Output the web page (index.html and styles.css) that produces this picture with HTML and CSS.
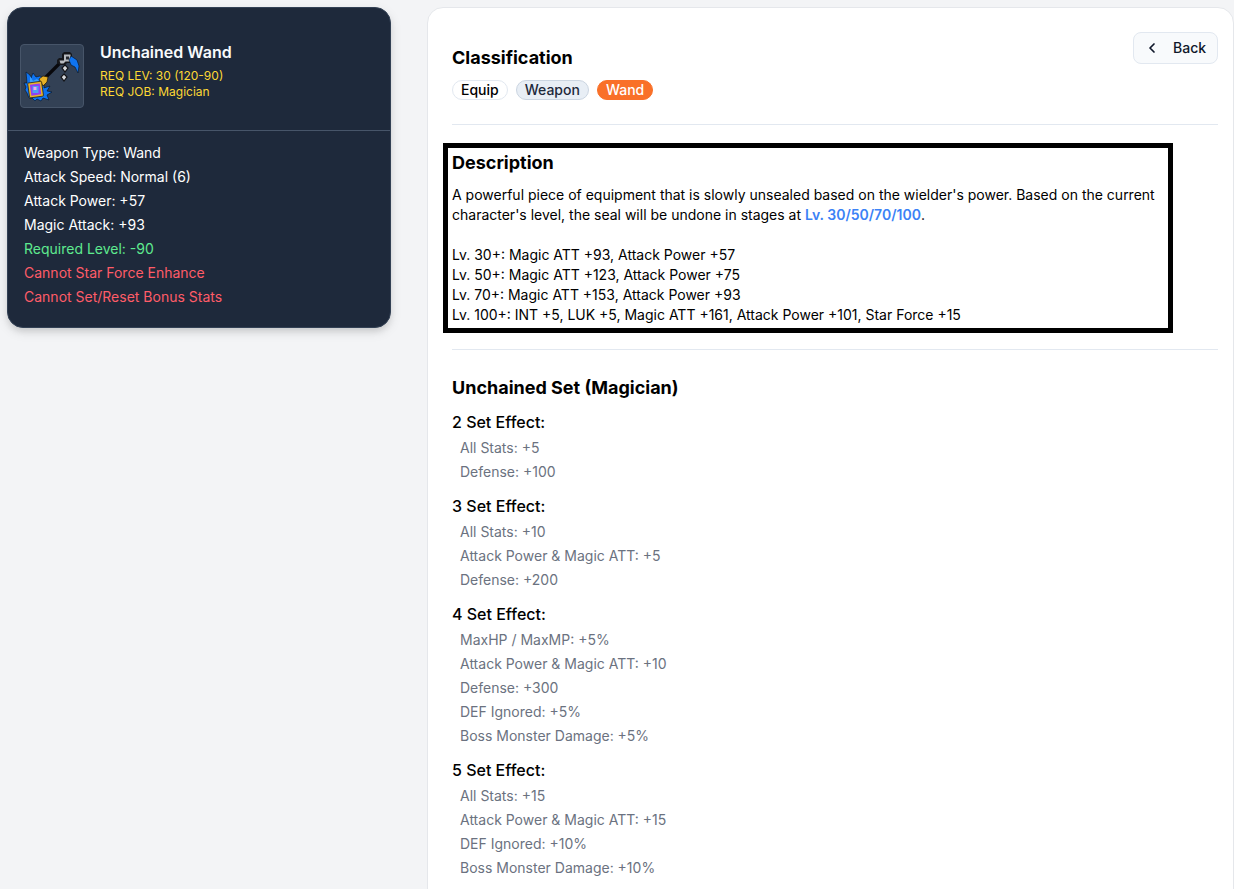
FILE: index.html
```html
<!DOCTYPE html>
<html lang="en">
<head>
<meta charset="utf-8">
<title>Unchained Wand</title>
<link rel="stylesheet" href="styles.css">
</head>
<body>
<div class="page">
  <aside class="card">
    <header class="card-head">
      <div class="thumb">
        <svg width="62" height="62" viewBox="0 0 62 62" aria-hidden="true">
          <path d="M5 27l4 3 1 3 2-5 3 4 4-1 4 2 0 10 6-2-3 5 5 1-5 3 2 5-6-2-2 3-4-2-2 2-3-3-3 0-2-5-2-3 1-3-2-4 3 0z" fill="#0f74f0" stroke="#07101f" stroke-width=".6"/>
          <path d="M9 31l3 5 4-2 3 3-6 4-4 0z" fill="#38a0ff"/>
          <path d="M24 33L39 18" stroke="#08080c" stroke-width="3.200"/>
          <path d="M18 34l4-3 5 1-1 5-4 4z" fill="#e6b026" stroke="#1d1506" stroke-width=".7"/>
          <rect x="7.500" y="37" width="14" height="15" rx="1" fill="#e8b42c" stroke="#1d1506" stroke-width=".7" transform="rotate(-8 15 44)"/>
          <rect x="9.500" y="39" width="10" height="11" fill="#8f3ff5" transform="rotate(-8 15 44)"/>
          <rect x="11.500" y="41" width="6" height="7" fill="#4f9ff5"/>
          <rect x="12.500" y="42" width="3" height="3" fill="#f0a8ee"/>
          <path d="M36 15l2-2h3V9l2-2h6l2 2v9h-5l-2 2h-5l-3-2z" fill="#15161a"/>
          <path d="M38.500 15.500h4.500v-6h6.500v7h-5l-2 2h-3z" fill="#b7babf"/>
          <rect x="45" y="11.500" width="3" height="3" fill="#26282e"/>
          <path d="M44 20l3 3-3 4-3-4z" fill="#d4d6da" stroke="#121317" stroke-width="1.200"/>
          <path d="M43 29l3 3-3 4-3-4z" fill="#d4d6da" stroke="#121317" stroke-width="1.200"/>
          <path d="M50 11l6 4 2 6-1 7-3-6-4-2-2-5z" fill="#0f74f0" stroke="#07101f" stroke-width=".6"/>
        </svg>
      </div>
      <div class="titles">
        <h1 class="item-name">Unchained Wand</h1>
        <p class="req">REQ LEV: 30 (120-90)</p>
        <p class="req">REQ JOB: Magician</p>
      </div>
    </header>
    <ul class="stats">
      <li>Weapon Type: Wand</li>
      <li>Attack Speed: Normal (6)</li>
      <li>Attack Power: +57</li>
      <li>Magic Attack: +93</li>
      <li class="good">Required Level: -90</li>
      <li class="bad">Cannot Star Force Enhance</li>
      <li class="bad">Cannot Set/Reset Bonus Stats</li>
    </ul>
  </aside>

  <main class="panel">
    <section class="classification">
      <div>
        <h2 class="section-title">Classification</h2>
        <div class="tags">
          <span class="tag tag-plain">Equip</span>
          <span class="tag tag-soft">Weapon</span>
          <span class="tag tag-hot">Wand</span>
        </div>
      </div>
      <button class="back" type="button">
        <svg width="16" height="16" viewBox="0 0 16 16" fill="none" stroke="#0f172a" stroke-width="1.700" stroke-linecap="round" stroke-linejoin="round" aria-hidden="true"><path d="M10 4L6 8l4 4"/></svg>
        <span>Back</span>
      </button>
    </section>

    <section class="description">
      <h2 class="section-title">Description</h2>
      <p class="desc-text">A powerful piece of equipment that is slowly unsealed based on the wielder's power. Based on the current character's level, the seal will be undone in stages at <strong class="hl">Lv. 30/50/70/100</strong>.</p>
      <p class="desc-text">Lv. 30+: Magic ATT +93, Attack Power +57<br>Lv. 50+: Magic ATT +123, Attack Power +75<br>Lv. 70+: Magic ATT +153, Attack Power +93<br>Lv. 100+: INT +5, LUK +5, Magic ATT +161, Attack Power +101, Star Force +15</p>
    </section>

    <section class="set">
      <h2 class="section-title">Unchained Set (Magician)</h2>
      <div class="tiers">
        <div class="tier">
          <h3>2 Set Effect:</h3>
          <p>All Stats: +5</p>
          <p>Defense: +100</p>
        </div>
        <div class="tier">
          <h3>3 Set Effect:</h3>
          <p>All Stats: +10</p>
          <p>Attack Power &amp; Magic ATT: +5</p>
          <p>Defense: +200</p>
        </div>
        <div class="tier">
          <h3>4 Set Effect:</h3>
          <p>MaxHP / MaxMP: +5%</p>
          <p>Attack Power &amp; Magic ATT: +10</p>
          <p>Defense: +300</p>
          <p>DEF Ignored: +5%</p>
          <p>Boss Monster Damage: +5%</p>
        </div>
        <div class="tier">
          <h3>5 Set Effect:</h3>
          <p>All Stats: +15</p>
          <p>Attack Power &amp; Magic ATT: +15</p>
          <p>DEF Ignored: +10%</p>
          <p>Boss Monster Damage: +10%</p>
        </div>
      </div>
    </section>
  </main>
</div>
</body>
</html>
```
FILE: styles.css
```css
* { box-sizing: border-box; }
html, body { margin: 0; height: 100%; overflow: hidden; }
body {
  background: #f3f4f6;
  color: #000;
  font-family: Inter, "Liberation Sans", sans-serif;
  font-size: 14px;
  line-height: 20px;
}
.page {
  display: flex;
  align-items: flex-start;
  gap: 36px;
  padding: 7px 0 0 7px;
}
.card {
  flex: 0 0 384px;
  height: 321px;
  background: #1e293b;
  border: 1px solid #334155;
  border-radius: 16px;
  box-shadow: 0 4px 6px -1px rgba(0,0,0,.1), 0 4px 12px rgba(0,0,0,.1);
  color: #fff;
}
.card-head {
  display: flex;
  align-items: center;
  gap: 16px;
  height: 123px;
  padding: 13px 12px 0;
  border-bottom: 1px solid #475569;
}
.thumb {
  flex: none;
  display: flex;
  align-items: center;
  justify-content: center;
  width: 64px;
  height: 64px;
  background: #334155;
  border: 1px solid #475569;
  border-radius: 4px;
}
.titles { margin-top: -12px; }
.item-name {
  margin: 0 0 4px;
  font-size: 16px;
  line-height: 24px;
  font-weight: 600;
  color: #f8fafc;
}
.req {
  margin: 0;
  font-size: 12px;
  line-height: 16px;
  color: #fdd835;
}
.stats {
  list-style: none;
  margin: 0;
  padding: 10px 16px;
  color: #fff;
}
.stats li { line-height: 24px; }
.stats .good { color: #5eea8f; }
.stats .bad { color: #ff5c68; }
.panel {
  flex: 1;
  min-width: 0;
  height: 1000px;
  padding: 36px 15px 0 24px;
  background: #fff;
  border: 1px solid #e5e7eb;
  border-radius: 16px;
}
.section-title {
  margin: 0;
  font-size: 18px;
  line-height: 28px;
  font-weight: 700;
  color: #000;
}
.classification {
  display: flex;
  justify-content: space-between;
  align-items: flex-start;
  height: 81px;
  border-bottom: 1px solid #e2e8f0;
}
.tags {
  display: flex;
  gap: 8px;
  margin-top: 8px;
}
.tag {
  display: inline-flex;
  align-items: center;
  height: 20px;
  padding: 0 8px;
  border: 1px solid #e2e8f0;
  border-radius: 10px;
  font-size: 14px;
  font-weight: 500;
  line-height: 18px;
}
.tag-soft { background: #e8eef5; border-color: #cbd5e1; color: #1e293b; }
.tag-hot { background: #f97028; border-color: #f97028; color: #fff; }
.back {
  display: flex;
  align-items: center;
  gap: 13px;
  width: 85px;
  height: 32px;
  margin-top: -12px;
  padding: 0 8px 0 10px;
  background: #f8fafc;
  border: 1px solid #e2e8f0;
  border-radius: 8px;
  color: #0f172a;
  font: 500 14px/20px Inter, "Liberation Sans", sans-serif;
}
.description {
  width: 730px;
  height: 190px;
  margin: 18px 0 0 -9px;
  padding: 1px 4px 0;
  border: 5px solid #000;
}
.desc-text { margin: 8px 0 0; }
.desc-text + .desc-text { margin-top: 20px; }
.hl { color: #3b82f6; font-weight: 600; }
.set {
  margin-top: 16px;
  padding-top: 24px;
  border-top: 1px solid #e2e8f0;
}
.tiers {
  display: flex;
  flex-direction: column;
  gap: 10px;
  margin-top: 8px;
}
.tier h3 {
  margin: 0 0 2px;
  font-size: 16px;
  line-height: 24px;
  font-weight: 500;
}
.tier p {
  margin: 0;
  padding-left: 8px;
  line-height: 24px;
  color: #6b7280;
}
```
